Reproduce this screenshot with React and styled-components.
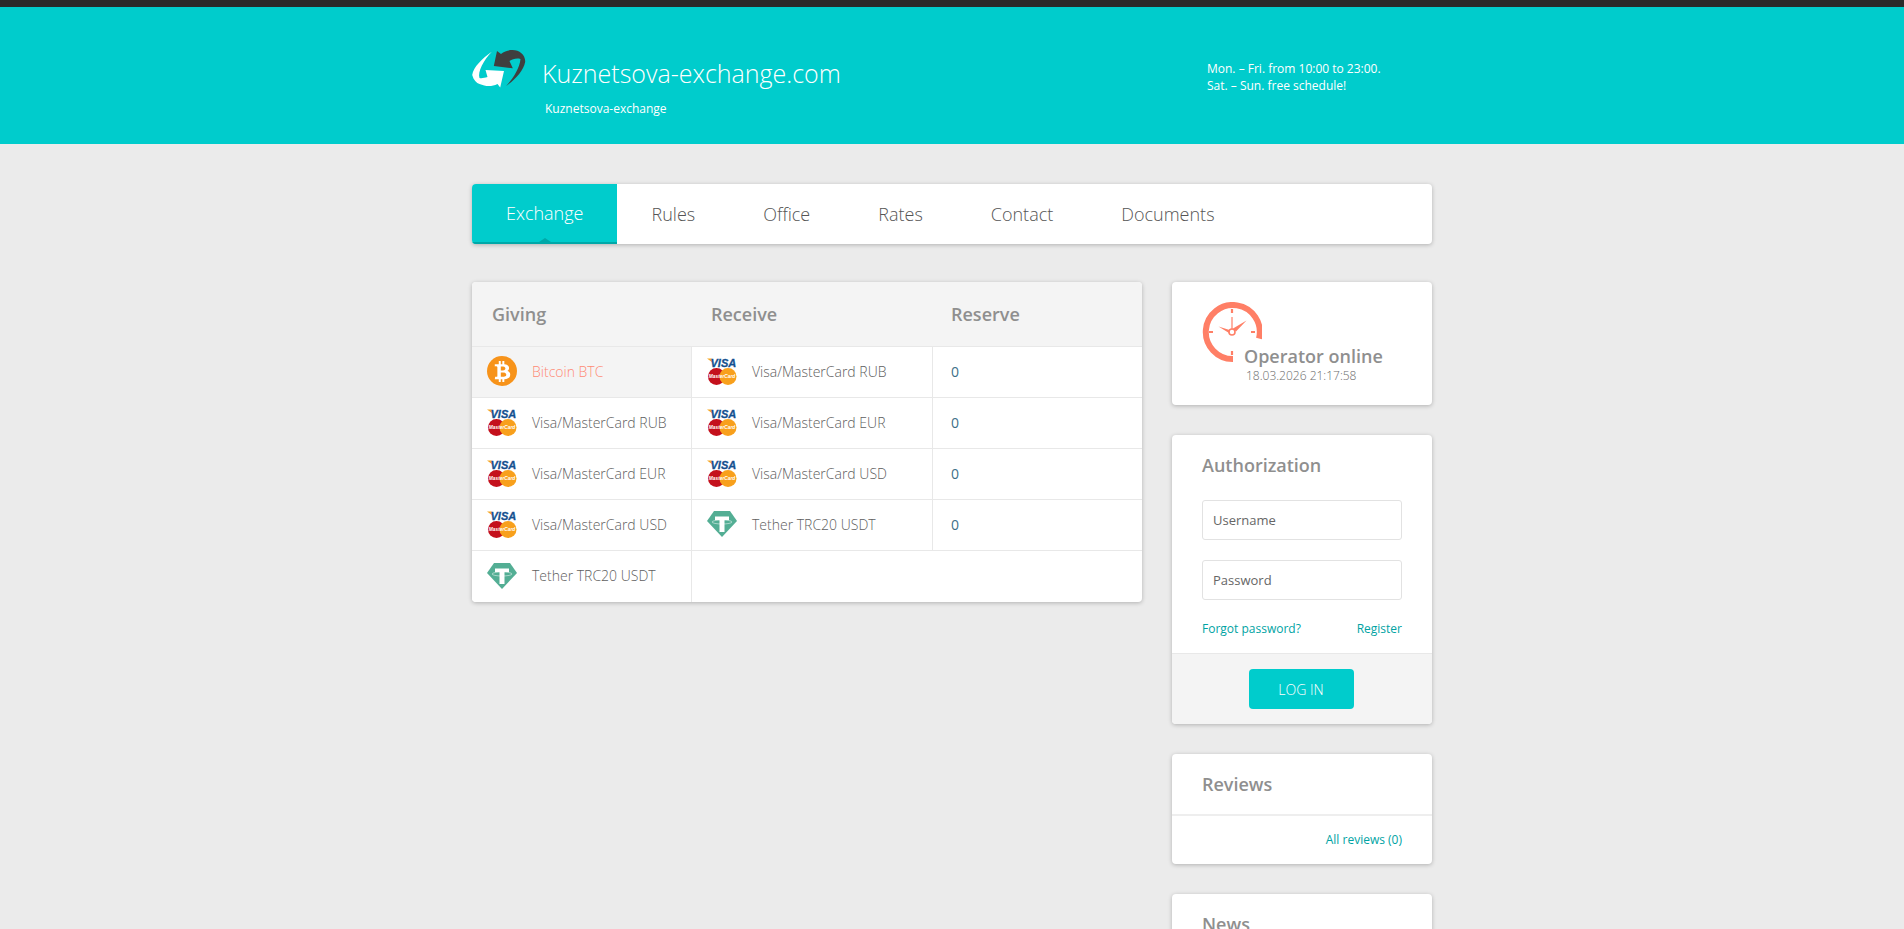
import React from 'react';
import styled, { createGlobalStyle } from 'styled-components';
import { FaBtc } from 'react-icons/fa';

const GlobalStyle = createGlobalStyle`
  html, body {
    margin: 0;
    padding: 0;
    height: 100%;
    overflow: hidden;
    background: #ebebeb;
    font-family: "Open Sans", "Liberation Sans", sans-serif;
  }
`;

const Header = styled.header`
  height: 137px;
  background: #00cccc;
  border-top: 7px solid #2a2a2a;
  color: #fff;
`;

const Wrap = styled.div`
  width: 960px;
  margin: 0 auto;
`;

const HeaderInner = styled(Wrap)`
  display: flex;
  height: 100%;
`;

const Brand = styled.div`
  width: 735px;
  display: flex;
  padding-top: 43px;
  box-sizing: border-box;
`;

const BrandText = styled.div`
  margin-left: 16px;
`;

const SiteName = styled.div`
  font-size: 25px;
  font-weight: 300;
  line-height: 36px;
  margin-top: 5px;
`;

const Tagline = styled.div`
  font-size: 12px;
  line-height: 16px;
  margin: 10px 0 0 3px;
`;

const Hours = styled.div`
  padding-top: 53px;
  font-size: 12px;
  line-height: 17px;
`;

const Menu = styled.nav`
  display: flex;
  height: 60px;
  margin: 40px 0 38px;
  background: #fff;
  border-radius: 4px;
  box-shadow: 0 1px 4px rgba(0, 0, 0, 0.25);
  overflow: hidden;
`;

const Tab = styled.a`
  position: relative;
  display: flex;
  align-items: center;
  padding: 0 34px;
  font-size: 18px;
  font-weight: 300;
  color: ${(p) => (p.$active ? '#fff' : '#555')};
  background: ${(p) => (p.$active ? '#00cccc' : 'transparent')};
  border-bottom: ${(p) => (p.$active ? '2px solid #00a8a8' : '0')};
  box-sizing: border-box;

  ${(p) => p.$active && `
    &::after {
      content: '';
      position: absolute;
      left: 50%;
      bottom: 0;
      margin-left: -6px;
      border: 6px solid transparent;
      border-top: 0;
      border-bottom: 4px solid #00a8a8;
    }
  `}
`;

const Columns = styled.div`
  display: flex;
  justify-content: space-between;
  align-items: flex-start;
`;

const Card = styled.div`
  background: #fff;
  border-radius: 4px;
  box-shadow: 0 1px 4px rgba(0, 0, 0, 0.25);
  overflow: hidden;
`;

const ExchangeTable = styled(Card)`
  width: 670px;
`;

const TableHead = styled.div`
  display: flex;
  height: 64px;
  align-items: center;
  background: #f4f4f4;
  border-bottom: 1px solid #e8e8e8;
`;

const HeadCell = styled.div`
  width: ${(p) => p.$width}px;
  padding-left: ${(p) => p.$pad}px;
  box-sizing: border-box;
  font-size: 18px;
  font-weight: 600;
  color: #8f8f8f;
`;

const TableBody = styled.div`
  display: flex;
`;

const GiveCol = styled.div`
  width: 220px;
  flex: none;
  border-right: 1px solid #e8e8e8;
  box-sizing: border-box;
`;

const ReceiveCol = styled.div`
  flex: 1;
`;

const Cell = styled.div`
  display: flex;
  align-items: center;
  height: 51px;
  box-sizing: border-box;
  padding: 0 0 2px 15px;
  font-size: 14px;
  font-weight: 300;
  color: ${(p) => (p.$active ? '#ff8a75' : '#606060')};
  background: ${(p) => (p.$active ? '#f4f4f4' : '#fff')};
  border-bottom: ${(p) => (p.$last ? '0' : '1px solid #e8e8e8')};
`;

const IconSlot = styled.span`
  display: flex;
  align-items: center;
  justify-content: center;
  width: 30px;
  height: 30px;
  margin-right: 15px;
  flex: none;
`;

const BitcoinBadge = styled.span`
  display: flex;
  align-items: center;
  justify-content: center;
  width: 30px;
  height: 30px;
  border-radius: 50%;
  background: #f7931a;
  color: #fff;
  font-size: 21px;
`;

const ReceiveRow = styled.div`
  display: flex;
  height: 51px;
  box-sizing: border-box;
  border-bottom: 1px solid #e8e8e8;
`;

const ReceiveCell = styled.div`
  width: 241px;
  display: flex;
  align-items: center;
  box-sizing: border-box;
  padding: 0 0 2px 15px;
  font-size: 14px;
  font-weight: 300;
  color: #606060;
  border-right: 1px solid #e8e8e8;
`;

const ReserveCell = styled.div`
  display: flex;
  align-items: center;
  padding: 0 0 2px 18px;
  font-size: 14px;
  color: #3d6f87;
`;

const Sidebar = styled.aside`
  width: 260px;
  display: flex;
  flex-direction: column;
  gap: 30px;
`;

const OperatorCard = styled(Card)`
  height: 123px;
  padding: 20px 30px 0;
  box-sizing: border-box;
`;

const OperatorText = styled.div`
  margin: -18px 0 0 42px;
`;

const OperatorTitle = styled.div`
  font-size: 18px;
  font-weight: 600;
  line-height: 24px;
  color: #8f8f8f;
  white-space: nowrap;
`;

const OperatorDate = styled.div`
  font-size: 12px;
  line-height: 16px;
  font-weight: 300;
  color: #6b6b6b;
  margin-left: 2px;
`;

const BoxTitle = styled.div`
  font-size: 18px;
  font-weight: 600;
  line-height: 24px;
  color: #8f8f8f;
`;

const AuthBody = styled.div`
  padding: 18px 30px 0;
  height: 218px;
  box-sizing: border-box;
`;

const Field = styled.input`
  display: block;
  width: 200px;
  height: 40px;
  box-sizing: border-box;
  margin-top: ${(p) => p.$top}px;
  padding: 0 10px;
  border: 1px solid #e2e2e2;
  border-radius: 3px;
  background: #fff;
  font-family: inherit;
  font-size: 13px;
  color: #555;

  &::placeholder {
    color: #666;
    opacity: 1;
  }
`;

const LinkRow = styled.div`
  display: flex;
  justify-content: space-between;
  margin-top: 20px;
`;

const TealLink = styled.a`
  font-size: 12px;
  line-height: 18px;
  color: #00a3a3;
`;

const AuthFoot = styled.div`
  display: flex;
  justify-content: center;
  align-items: flex-start;
  height: 71px;
  padding: 15px 2px 0 0;
  box-sizing: border-box;
  background: #f4f4f4;
  border-top: 1px solid #e8e8e8;
`;

const LoginButton = styled.button`
  width: 105px;
  height: 40px;
  border: 0;
  border-radius: 4px;
  background: #00cccc;
  color: #fff;
  font-family: inherit;
  font-size: 14px;
  font-weight: 300;
`;

const BoxHead = styled.div`
  padding: 18px 30px 0;
  height: 62px;
  box-sizing: border-box;
  border-bottom: 2px solid #eeeeee;
`;

const BoxFoot = styled.div`
  display: flex;
  justify-content: flex-end;
  padding: 15px 30px 15px;
`;

const NewsCard = styled(Card)`
  height: 120px;
  padding: 18px 30px 0;
  box-sizing: border-box;
`;

const Logo = () => (
  <svg width="54" height="38" viewBox="472.5 50 54 38">
    <path
      fill="#fff"
      d="M492.3 51.7C482 59 474 67 472.7 75C474 80 477 83 480 84C486 86.5 492 87 498 84L500.7 87.6L504.5 71L486 70L488 77C485 78 482 78.5 480 78C478 72 484 60 492.3 51.7Z"
    />
    <path
      fill="#3f3f3f"
      d="M497.5 51L494.3 66L513.3 68.3L510 61C513 59 517 58 521 59C520 69 513 79 506.7 86C516 79 524 71 525.7 61.7C526 55 520 50 513 50C509 50 505 51 501.5 54Z"
    />
  </svg>
);

const BitcoinIcon = () => (
  <BitcoinBadge>
    <FaBtc />
  </BitcoinBadge>
);

const CardsIcon = () => (
  <svg width="30" height="27" viewBox="0 0 30 27">
    <path fill="#f5a623" d="M0 0.5H4.5L5.5 4.5Z" />
    <text
      x="3.5"
      y="9"
      fontFamily="Liberation Sans, sans-serif"
      fontWeight="700"
      fontStyle="italic"
      fontSize="11"
      fill="#14508f"
      stroke="#14508f"
      strokeWidth="0.3"
    >
      VISA
    </text>
    <circle cx="9.5" cy="18.5" r="8.5" fill="#c4101c" />
    <circle cx="21" cy="18.5" r="8.5" fill="#f8a01c" />
    <text
      x="15"
      y="20.2"
      textAnchor="middle"
      fontFamily="Liberation Sans, sans-serif"
      fontWeight="700"
      fontStyle="italic"
      fontSize="4.8"
      fill="#fff"
    >
      MasterCard
    </text>
  </svg>
);

const TetherIcon = () => (
  <svg width="30" height="26" viewBox="0 0 30 26">
    <path fill="#53ae94" d="M7 0H23L30 10L15 26L0 10Z" />
    <path fill="#fff" d="M8 5.5H22V9H17.5V21H12.5V9H8Z" />
    <ellipse cx="15" cy="11" rx="10" ry="2" fill="none" stroke="#fff" strokeOpacity="0.7" strokeWidth="0.7" />
  </svg>
);

const ClockIcon = () => (
  <svg width="60" height="60" viewBox="0 0 60 60" style={{ display: 'block' }}>
    <path
      d="M57 36.5A27 27 0 1 0 31 57"
      fill="none"
      stroke="#ff7f66"
      strokeWidth="6"
    />
    <g stroke="#ff7f66" strokeWidth="2.2" fill="none">
      <path d="M30 7V11M30 49V53M7 30H11M49 30H53" />
      <circle cx="30" cy="30" r="3" strokeWidth="1.6" />
      <path d="M30 27V15" strokeWidth="1.2" />
    </g>
    <path fill="#ff7f66" d="M31 26.5L44.5 18.5L34 29.5ZM27.5 28L16.5 24.5L27 31Z" />
  </svg>
);

const giving = [
  { name: 'Bitcoin BTC', icon: <BitcoinIcon />, active: true },
  { name: 'Visa/MasterCard RUB', icon: <CardsIcon /> },
  { name: 'Visa/MasterCard EUR', icon: <CardsIcon /> },
  { name: 'Visa/MasterCard USD', icon: <CardsIcon /> },
  { name: 'Tether TRC20 USDT', icon: <TetherIcon />, last: true },
];

const receive = [
  { name: 'Visa/MasterCard RUB', icon: <CardsIcon /> },
  { name: 'Visa/MasterCard EUR', icon: <CardsIcon /> },
  { name: 'Visa/MasterCard USD', icon: <CardsIcon /> },
  { name: 'Tether TRC20 USDT', icon: <TetherIcon /> },
];

const tabs = ['Exchange', 'Rules', 'Office', 'Rates', 'Contact', 'Documents'];

const App = () => (
  <>
    <GlobalStyle />
    <Header>
      <HeaderInner>
        <Brand>
          <Logo />
          <BrandText>
            <SiteName>Kuznetsova-exchange.com</SiteName>
            <Tagline>Kuznetsova-exchange</Tagline>
          </BrandText>
        </Brand>
        <Hours>
          Mon. – Fri. from 10:00 to 23:00.
          <br />
          Sat. – Sun. free schedule!
        </Hours>
      </HeaderInner>
    </Header>
    <Wrap>
      <Menu>
        {tabs.map((tab, index) => (
          <Tab key={tab} $active={index === 0}>{tab}</Tab>
        ))}
      </Menu>
      <Columns>
        <ExchangeTable>
          <TableHead>
            <HeadCell $width={220} $pad={20}>Giving</HeadCell>
            <HeadCell $width={240} $pad={19}>Receive</HeadCell>
            <HeadCell $width={210} $pad={19}>Reserve</HeadCell>
          </TableHead>
          <TableBody>
            <GiveCol>
              {giving.map((item) => (
                <Cell key={item.name} $active={item.active} $last={item.last}>
                  <IconSlot>{item.icon}</IconSlot>
                  {item.name}
                </Cell>
              ))}
            </GiveCol>
            <ReceiveCol>
              {receive.map((item) => (
                <ReceiveRow key={item.name}>
                  <ReceiveCell>
                    <IconSlot>{item.icon}</IconSlot>
                    {item.name}
                  </ReceiveCell>
                  <ReserveCell>0</ReserveCell>
                </ReceiveRow>
              ))}
            </ReceiveCol>
          </TableBody>
        </ExchangeTable>
        <Sidebar>
          <OperatorCard>
            <ClockIcon />
            <OperatorText>
              <OperatorTitle>Operator online</OperatorTitle>
              <OperatorDate>18.03.2026 21:17:58</OperatorDate>
            </OperatorText>
          </OperatorCard>
          <Card>
            <AuthBody>
              <BoxTitle>Authorization</BoxTitle>
              <Field $top={23} placeholder="Username" />
              <Field $top={20} placeholder="Password" />
              <LinkRow>
                <TealLink>Forgot password?</TealLink>
                <TealLink>Register</TealLink>
              </LinkRow>
            </AuthBody>
            <AuthFoot>
              <LoginButton>LOG IN</LoginButton>
            </AuthFoot>
          </Card>
          <Card>
            <BoxHead>
              <BoxTitle>Reviews</BoxTitle>
            </BoxHead>
            <BoxFoot>
              <TealLink>All reviews (0)</TealLink>
            </BoxFoot>
          </Card>
          <NewsCard>
            <BoxTitle>News</BoxTitle>
          </NewsCard>
        </Sidebar>
      </Columns>
    </Wrap>
  </>
);

export default App;
